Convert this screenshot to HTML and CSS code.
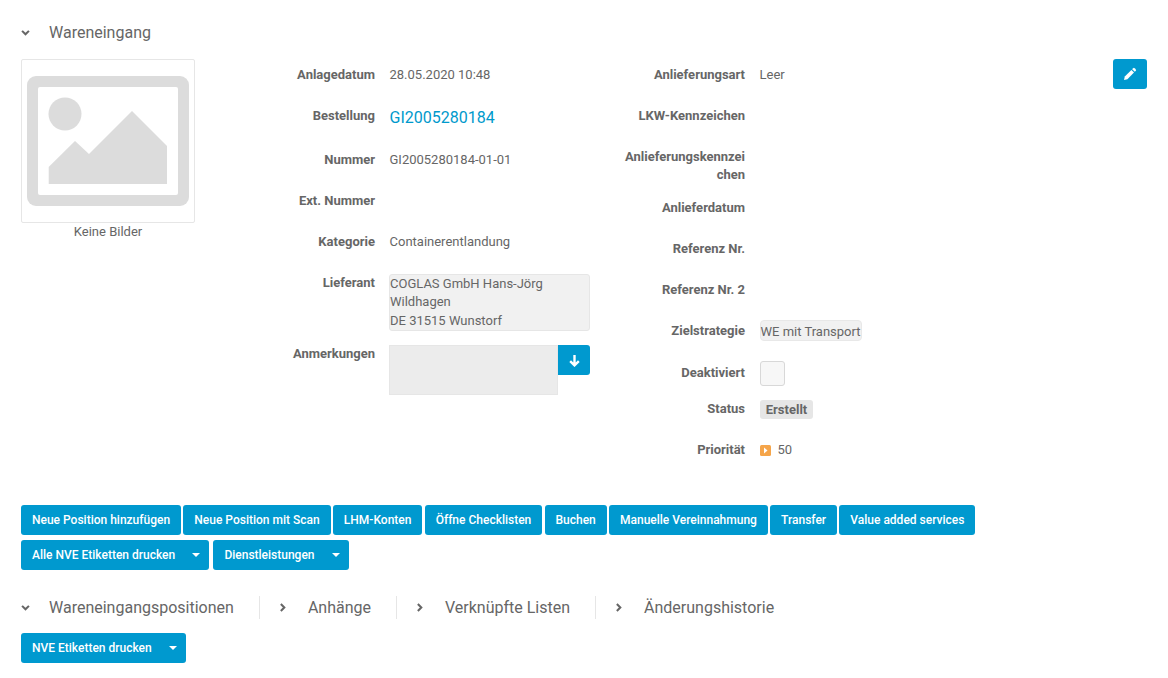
FILE: index.html
```html
<!DOCTYPE html>
<html lang="de">
<head>
<meta charset="utf-8">
<title>Wareneingang</title>
<link rel="stylesheet" href="styles.css">
</head>
<body>
<main class="page">
  <h2 class="section-head">
    <svg class="chev" viewBox="0 0 10 7"><path d="M1 1 5 5 9 1" /></svg>
    <span>Wareneingang</span>
  </h2>
  <section class="detail">
    <div class="photo">
      <div class="photo-frame">
        <svg viewBox="0 0 162 130" class="placeholder">
          <rect width="162" height="130" rx="9" class="ph-fill"/>
          <rect x="11" y="11" width="140" height="108" rx="2" fill="#fff"/>
          <circle cx="38" cy="38" r="16.500" class="ph-fill"/>
          <path d="M21.700 108V91L48 65 62 78 105 35 140 70V108Z" class="ph-fill"/>
        </svg>
      </div>
      <div class="photo-caption">Keine Bilder</div>
    </div>
    <div class="col col-a">
      <div class="row"><div class="lbl">Anlagedatum</div><div class="val">28.05.2020 10:48</div></div>
      <div class="row row-link"><div class="lbl">Bestellung</div><div class="val"><a class="link">GI2005280184</a></div></div>
      <div class="row row-c"><div class="lbl">Nummer</div><div class="val">GI2005280184-01-01</div></div>
      <div class="row"><div class="lbl">Ext. Nummer</div><div class="val"></div></div>
      <div class="row"><div class="lbl">Kategorie</div><div class="val">Containerentlandung</div></div>
      <div class="row row-box"><div class="lbl">Lieferant</div><div class="val"><div class="addr">COGLAS GmbH Hans-Jörg<br>Wildhagen<br>DE 31515 Wunstorf</div></div></div>
      <div class="row"><div class="lbl">Anmerkungen</div><div class="val note-wrap"><div class="note"></div><button class="btn-down"><svg viewBox="0 0 12 12"><path d="M6 1V10.500M2 6.500 6 10.500l4-4"/></svg></button></div></div>
    </div>
    <div class="col col-b">
      <div class="row"><div class="lbl">Anlieferungsart</div><div class="val">Leer</div></div>
      <div class="row"><div class="lbl">LKW-Kennzeichen</div><div class="val"></div></div>
      <div class="row row-two"><div class="lbl">Anlieferungskennzei<br>chen</div><div class="val"></div></div>
      <div class="row"><div class="lbl">Anlieferdatum</div><div class="val"></div></div>
      <div class="row"><div class="lbl">Referenz Nr.</div><div class="val"></div></div>
      <div class="row"><div class="lbl">Referenz Nr. 2</div><div class="val"></div></div>
      <div class="row row-z"><div class="lbl">Zielstrategie</div><div class="val"><span class="chip">WE mit Transport</span></div></div>
      <div class="row row-d"><div class="lbl">Deaktiviert</div><div class="val"><span class="check"></span></div></div>
      <div class="row row-s"><div class="lbl">Status</div><div class="val"><span class="status">Erstellt</span></div></div>
      <div class="row row-p"><div class="lbl">Priorität</div><div class="val prio"><svg viewBox="0 0 11 11" class="prio-ico"><rect width="11" height="11" rx="1.500" fill="#f5a54a"/><path d="M4 2.500 7.500 5.500 4 8.500Z" fill="#fff"/></svg>50</div></div>
    </div>
    <button class="btn-edit"><svg viewBox="0 0 14 14"><path d="M1 13 1.800 9.600 8.400 3 11 5.600 4.400 12.200Z"/><path d="M9.200 2.200 10.200 1.200a1 1 0 0 1 1.400 0l1.200 1.200a1 1 0 0 1 0 1.400L11.800 4.800Z"/></svg></button>
  </section>
  <div class="toolbar">
    <button class="btn">Neue Position hinzufügen</button>
    <button class="btn">Neue Position mit Scan</button>
    <button class="btn">LHM-Konten</button>
    <button class="btn">Öffne Checklisten</button>
    <button class="btn">Buchen</button>
    <button class="btn">Manuelle Vereinnahmung</button>
    <button class="btn">Transfer</button>
    <button class="btn">Value added services</button>
    <button class="btn btn-dd">Alle NVE Etiketten drucken<i class="caret"></i></button>
    <button class="btn btn-dd">Dienstleistungen<i class="caret"></i></button>
  </div>
  <nav class="tabs">
    <div class="tab tab-first"><svg class="chev" viewBox="0 0 10 7"><path d="M1 1 5 5 9 1"/></svg><span>Wareneingangspositionen</span></div>
    <div class="tab"><svg class="chev chev-r" viewBox="0 0 7 10"><path d="M1 1 5 5 1 9"/></svg><span>Anhänge</span></div>
    <div class="tab"><svg class="chev chev-r" viewBox="0 0 7 10"><path d="M1 1 5 5 1 9"/></svg><span>Verknüpfte Listen</span></div>
    <div class="tab"><svg class="chev chev-r" viewBox="0 0 7 10"><path d="M1 1 5 5 1 9"/></svg><span>Änderungshistorie</span></div>
  </nav>
  <div class="toolbar-sub">
    <button class="btn btn-dd">NVE Etiketten drucken<i class="caret"></i></button>
  </div>
</main>
</body>
</html>
```
FILE: styles.css
```css
* { box-sizing: border-box; }
html, body { margin: 0; padding: 0; }
body {
  font-family: Roboto, "Liberation Sans", sans-serif;
  font-size: 13px;
  line-height: 18px;
  color: #666;
  background: #fff;
  overflow: hidden;
  height: 678px;
}
.page { padding: 23px 21px 0; }
.section-head {
  display: flex;
  align-items: center;
  margin: 0;
  height: 19px;
  font-size: 16px;
  font-weight: 400;
  color: #666;
}
.section-head span { margin-left: 19px; }
.chev {
  width: 9px;
  height: 6px;
  fill: none;
  stroke: #666;
  stroke-width: 2.400;
  flex: none;
}
.chev-r { width: 6px; height: 9px; }
.detail {
  display: flex;
  align-items: flex-start;
  margin-top: 17px;
  position: relative;
  height: 431px;
}
.photo { width: 174px; flex: none; }
.photo-frame {
  height: 164px;
  border: 1px solid #e6e6e6;
  border-radius: 2px;
  padding: 0 5px;
  display: flex;
  align-items: center;
  justify-content: center;
}
.placeholder { width: 162px; height: 130px; display: block; }
.ph-fill { fill: #dcdcdc; }
.photo-caption { text-align: center; height: 18px; }
.col { display: flex; flex-direction: column; flex: none; padding-top: 7px; }
.col-a { width: 395px; margin-left: 75px; }
.col-b { width: 300px; margin-left: -40px; }
.col-a .lbl { width: 105px; }
.col-b .lbl { width: 120px; }
.row { display: flex; min-height: 41px; align-items: flex-start; }
.lbl {
  flex: none;
  font-weight: 700;
  text-align: right;
  color: #666;
}
.val { margin-left: 14.500px; flex: 1; }
.link { color: #0099cc; font-size: 16px; line-height: 21px; display: block; }
.row-link { min-height: 42px; }
.row-c { padding-top: 2px; min-height: 43px; }
.row-box { min-height: 71px; }
.addr {
  width: 201px;
  height: 57px;
  padding: 0 0 0 0.500px;
  line-height: 18.400px;
  background: #f1f1f1;
  border: 1px solid #e6e6e6;
  border-radius: 3px;
  margin-left: -1px;
}
.note-wrap { display: flex; margin-left: 14px; }
.note { width: 169px; height: 50px; background: #ececec; border: 1px solid #e6e6e6; }
.btn-down {
  width: 32px;
  height: 30px;
  border: 0;
  padding: 0;
  background: #0099cf;
  border-radius: 0 3px 3px 0;
  display: flex;
  align-items: center;
  justify-content: center;
}
.btn-down svg { width: 13px; height: 13px; fill: none; stroke: #fff; stroke-width: 2.200; }
.row-two { min-height: 51px; }
.row-z { min-height: 42px; }
.row-d { min-height: 36px; }
.row-s { min-height: 41px; }
.chip {
  display: block;
  margin-top: -2px;
  height: 21px;
  padding-top: 1px;
  line-height: 19px;
  width: 102px;
  text-align: center;
  background: #f1f1f1;
  border: 1px solid #e8e8e8;
  border-radius: 4px;
  white-space: nowrap;
}
.check {
  display: block;
  width: 25px;
  height: 25px;
  margin-top: -3px;
  background: #f7f7f7;
  border: 1px solid #d8d8d8;
  border-radius: 3px;
}
.status {
  display: block;
  width: 53px;
  height: 19px;
  line-height: 19px;
  padding-left: 1px;
  text-align: center;
  font-weight: 700;
  background: #e6e6e6;
  border-radius: 3px;
}
.prio { display: flex; align-items: center; gap: 7px; }
.prio-ico { width: 11px; height: 11px; }
.btn-edit {
  position: absolute;
  top: 0;
  right: 0;
  width: 34px;
  height: 30px;
  padding: 0;
  border: 0;
  background: #0099cf;
  border-radius: 3px;
  display: flex;
  align-items: center;
  justify-content: center;
}
.btn-edit svg { width: 14px; height: 14px; fill: #fff; }
.toolbar { display: flex; flex-wrap: wrap; gap: 5px 2.200px; margin-top: 15px; }
.btn {
  height: 30px;
  padding: 0 11px;
  background: #0099cf;
  color: #fff;
  font-family: inherit;
  font-size: 12px;
  font-weight: 500;
  border: 0;
  border-radius: 3px;
  white-space: nowrap;
}
.btn-dd { display: inline-flex; align-items: center; padding-right: 9px; }
.caret {
  display: block;
  margin-left: 17px;
  border-left: 4px solid transparent;
  border-right: 4px solid transparent;
  border-top: 4px solid #fff;
}
.toolbar .btn-dd { margin-right: 2px; }
.tabs { display: flex; align-items: center; margin-top: 25px; height: 25px; font-size: 16px; }
.tab { display: flex; align-items: center; height: 23px; border-right: 1px solid #e6e6e6; padding: 0 25px 0 20px; }
.tab span { margin-left: 22px; }
.tab-first { padding-left: 0; }
.tab-first span { margin-left: 19px; }
.tab:last-child { border-right: 0; }
.toolbar-sub { margin-top: 13px; display: flex; }
```
